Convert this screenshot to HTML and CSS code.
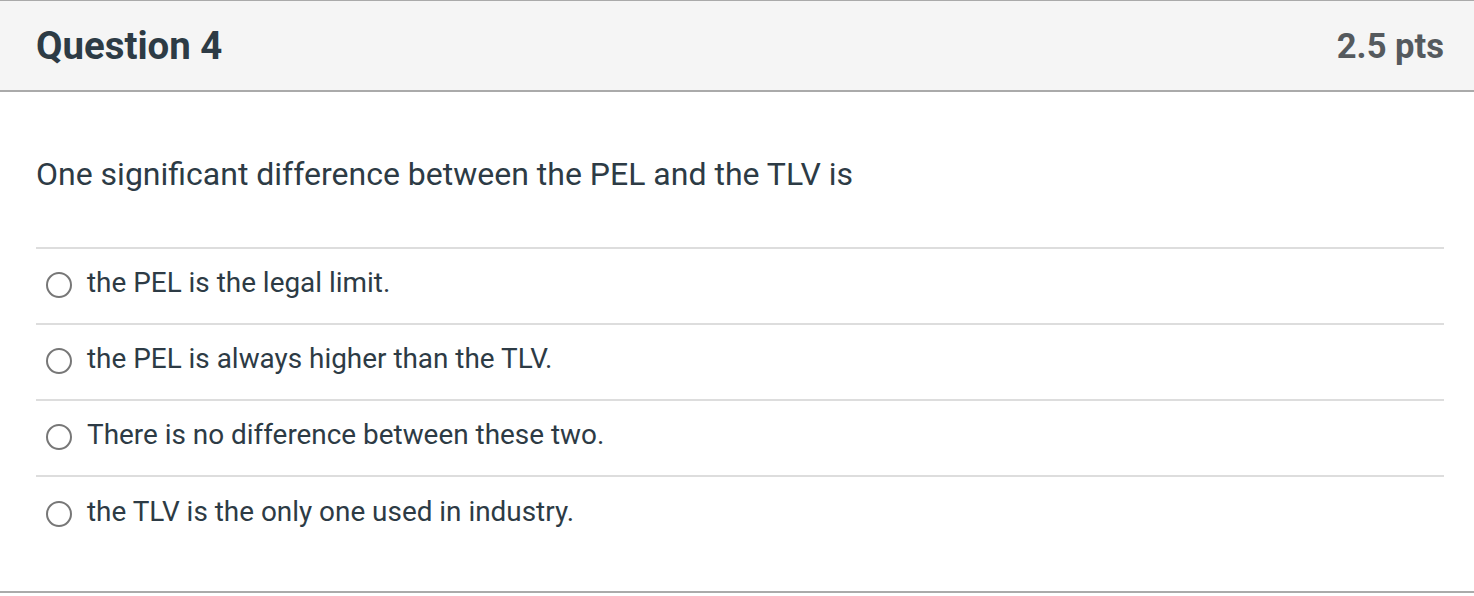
FILE: index.html
```html
<!DOCTYPE html>
<html>
<head>
<meta charset="utf-8">
<link rel="stylesheet" href="styles.css">
</head>
<body>
<div class="question">
  <div class="header">
    <h2 class="title">Question 4</h2>
    <div class="points">2.5 pts</div>
  </div>
  <div class="content">
    <p class="prompt">One significant difference between the PEL and the TLV is</p>
    <div class="answers">
      <div class="answer"><span class="radio"></span><span class="label">the PEL is the legal limit.</span></div>
      <div class="answer"><span class="radio"></span><span class="label">the PEL is always higher than the TLV.</span></div>
      <div class="answer"><span class="radio"></span><span class="label">There is no difference between these two.</span></div>
      <div class="answer"><span class="radio"></span><span class="label">the TLV is the only one used in industry.</span></div>
    </div>
  </div>
</div>
</body>
</html>
```
FILE: styles.css
```css
html, body {
  margin: 0;
  padding: 0;
  background: #ffffff;
}
body {
  font-family: Roboto, "Liberation Sans", sans-serif;
  color: #2d3b45;
}
.question {
  border-top: 1px solid #aaaaaa;
  border-bottom: 2px solid #aaaaaa;
  height: 593px;
  box-sizing: border-box;
}
.header {
  background: #f5f5f5;
  height: 89px;
  border-bottom: 2px solid #aaaaaa;
  display: flex;
  align-items: center;
  justify-content: space-between;
  padding: 0 30px 0 36px;
}
.title {
  margin: 0;
  font-size: 38.4px;
  font-weight: 700;
  color: #2d3b45;
}
.points {
  font-size: 34.6px;
  font-weight: 700;
  color: #555a5e;
}
.content {
  padding: 0 30px 0 36px;
}
.prompt {
  margin: 0;
  padding-top: 62px;
  height: 92px;
  box-sizing: border-box;
  font-size: 32px;
  line-height: 40px;
}
.answers {
  margin-top: 63px;
  border-top: 2px solid #dddddd;
}
.answer {
  display: flex;
  align-items: center;
  height: 76px;
  box-sizing: border-box;
  padding: 0 0 3px 10px;
  border-bottom: 2px solid #dddddd;
}
.answer:last-child {
  border-bottom: none;
}
.radio {
  width: 22px;
  height: 22px;
  border: 2px solid #777777;
  border-radius: 50%;
  flex: none;
  margin-right: 15px;
}
.label {
  font-size: 27.9px;
  line-height: 34px;
  margin-bottom: 4px;
}
```
